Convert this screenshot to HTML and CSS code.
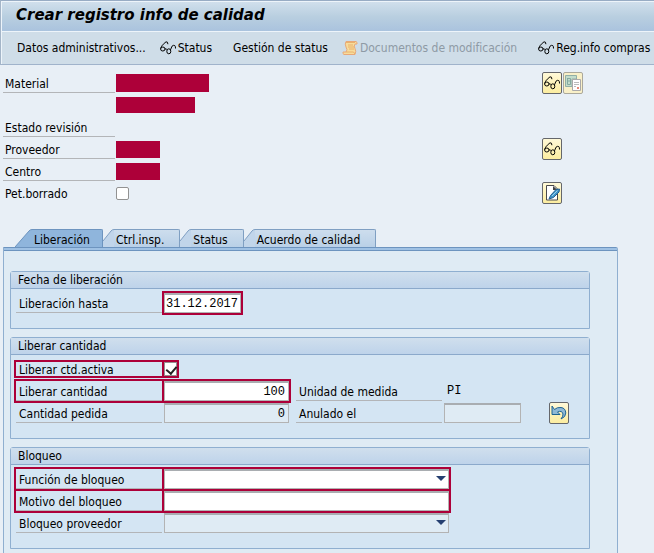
FILE: index.html
```html
<!DOCTYPE html>
<html lang="es">
<head>
<meta charset="UTF-8" />
<meta name="viewport" content="width=device-width, initial-scale=1.0" />
<title>Crear registro info de calidad</title>
<link rel="stylesheet" href="styles.css">
</head>
<body>
<svg class="sprite" aria-hidden="true">
  <symbol id="glasses" viewBox="0 0 16 16">
    <g fill="none" stroke="#000">
      <ellipse cx="2.800" cy="9" rx="2.200" ry="2"/>
      <ellipse cx="8.800" cy="11.300" rx="2" ry="2.500"/>
      <path d="M.7 8.500C1 7 2 5.500 3.300 4.200L6 1.800Q8 1.500 7.900 4.200M5 9Q6.500 8.300 7.200 9.800M10.500 9.800L12 6.200Q13.500 4.800 14.800 5.600Q15.600 6.300 15.500 8.500"/>
    </g>
  </symbol>
</svg>

<header>
  <h1>Crear registro info de calidad</h1>
  <nav class="toolbar">
    <button type="button">Datos administrativos...</button>
    <button type="button" class="last"><svg class="icon"><use href="#glasses"/></svg>Status</button>
    <button type="button">Gestión de status</button>
    <button type="button" class="last" disabled><svg class="icon" viewBox="0 0 16 16"><path d="M4 1.500H14Q15.500 2 15 4H13Q11.500 6 13 8.500Q14.500 11 13 14.500H2Q.5 14 1 12H4Q6 10 4 7Q2.500 4 4 1.500Z" fill="#f7dc9b" stroke="#e8a878"/><path d="M4 2.500H13M6 5H11M6 7H12M7 9H12M4 12H11.500L13 14" fill="none" stroke="#eab06c"/></svg>Documentos de modificación</button>
    <button type="button"><svg class="icon"><use href="#glasses"/></svg>Reg.info compras</button>
  </nav>
</header>

<main>
  <section class="head">
    <div class="row">
      <span class="label">Material</span>
      <span class="mask material"></span>
      <div class="actions">
        <button type="button" class="tool" aria-label="Visualizar material"><svg class="icon"><use href="#glasses"/></svg></button>
        <button type="button" class="tool" aria-label="Textos" disabled><svg class="icon" viewBox="0 0 16 16"><path d="M.5 .5H11.500V4H7V11.500H.5Z" fill="#c3dccb" stroke="#91afa6"/><path d="M2.500 3V9.500H5.500V3.500H3M3 6H5" fill="none" stroke="#84aaa0"/><path d="M7.500 4.500H15.500V15.500H7.500Z" fill="#fff" stroke="#aaa9a9"/><path d="M9 7.500H14M9 9.500H14M9 11.500H11" stroke="#bbb"/><path d="M12 12h2v2h-2z" fill="#e58a78"/></svg></button>
      </div>
    </div>
    <div class="row">
      <span class="label plain"></span>
      <span class="mask text"></span>
    </div>
    <div class="row">
      <span class="label">Estado revisión</span>
    </div>
    <div class="row">
      <span class="label">Proveedor</span>
      <span class="mask short"></span>
      <div class="actions">
        <button type="button" class="tool" aria-label="Visualizar proveedor"><svg class="icon"><use href="#glasses"/></svg></button>
      </div>
    </div>
    <div class="row">
      <span class="label">Centro</span>
      <span class="mask short"></span>
    </div>
    <div class="row">
      <label class="label plain" for="borrado">Pet.borrado</label>
      <input type="checkbox" id="borrado">
      <div class="actions">
        <button type="button" class="tool" aria-label="Texto explicativo"><svg class="icon" viewBox="0 0 16 16"><path d="M2.500 .5H10L13.500 4V15H2.500Z" fill="#fff" stroke="#49494d"/><path d="M9 1V5H13.500Z" fill="#444"/><path d="M5 14L6.500 10.500L12 4.500L15.500 4L15 7L9.500 12.500Z" fill="#3f94c8" stroke="#245f91"/><path d="M8 11L13.500 5.500" stroke="#9bd0ec"/></svg></button>
      </div>
    </div>
  </section>

  <div class="tabs" role="tablist">
    <button type="button" class="tab active" role="tab" aria-selected="true"><svg class="slope" viewBox="0 0 17 18"><path d="M0 18L14 2Q15 .5 17 .5V18Z" fill="#8fb5dc"/><path d="M0 18L14 2Q15 .5 17 .5" fill="none" stroke="#6d94bf"/></svg><span>Liberación</span></button>
    <button type="button" class="tab" role="tab"><svg class="slope" viewBox="0 0 11 18"><path d="M0 12L8 2Q9 .5 11 .5V18H0Z" fill="#c1d5ea"/><path d="M0 12L8 2Q9 .5 11 .5" fill="none" stroke="#7f9fc2"/></svg><span>Ctrl.insp.</span></button>
    <button type="button" class="tab" role="tab"><svg class="slope" viewBox="0 0 11 18"><path d="M0 12L8 2Q9 .5 11 .5V18H0Z" fill="#c1d5ea"/><path d="M0 12L8 2Q9 .5 11 .5" fill="none" stroke="#7f9fc2"/></svg><span>Status</span></button>
    <button type="button" class="tab" role="tab"><svg class="slope" viewBox="0 0 11 18"><path d="M0 12L8 2Q9 .5 11 .5V18H0Z" fill="#c1d5ea"/><path d="M0 12L8 2Q9 .5 11 .5" fill="none" stroke="#7f9fc2"/></svg><span>Acuerdo de calidad</span></button>
  </div>

  <div class="panel" role="tabpanel">
    <section class="group">
      <h2>Fecha de liberación</h2>
      <div class="row">
        <label class="label" for="hasta">Liberación hasta</label>
        <input type="text" class="date marked" id="hasta" value="31.12.2017">
      </div>
    </section>

    <section class="group">
      <h2>Liberar cantidad</h2>
      <div class="row">
        <label class="label check marked" for="activa">Liberar ctd.activa</label>
        <input type="checkbox" class="marked" id="activa" checked>
      </div>
      <div class="row">
        <label class="label marked" for="cantidad">Liberar cantidad</label>
        <input type="text" class="amount marked" id="cantidad" value="100">
        <span class="label second">Unidad de medida</span>
        <span class="value">PI</span>
      </div>
      <div class="row">
        <label class="label" for="pedida">Cantidad pedida</label>
        <input type="text" class="amount" id="pedida" value="0" readonly>
        <label class="label second" for="anulado">Anulado el</label>
        <input type="text" class="date" id="anulado" readonly>
        <button type="button" class="tool undo" aria-label="Anular"><svg class="icon" viewBox="0 0 16 16"><path d="M1 1V9.500H9L6.500 7Q11 5 12 9Q12.300 11 10 14Q14.800 12 14.800 8Q14.500 3 10 2.500Q6 2 3.500 4.500Z" fill="#8fb9d6" stroke="#1f6492"/></svg></button>
      </div>
    </section>

    <section class="group">
      <h2>Bloqueo</h2>
      <div class="row">
        <label class="label marked" for="funcion">Función de bloqueo</label>
        <div class="dropdown"><select id="funcion" class="marked"><option></option></select></div>
      </div>
      <div class="row">
        <label class="label marked" for="motivo">Motivo del bloqueo</label>
        <input type="text" class="long marked" id="motivo">
      </div>
      <div class="row">
        <label class="label" for="bloqueo">Bloqueo proveedor</label>
        <div class="dropdown"><select id="bloqueo" disabled><option></option></select></div>
      </div>
    </section>
  </div>
</main>
</body>
</html>
```
FILE: styles.css
```css
* {
  box-sizing: border-box;
}
body {
  margin: 0;
  min-height: 100vh;
  display: flex;
  flex-direction: column;
  background: #e8eff6;
  color: #000;
  font-family: "DejaVu Sans Condensed", Tahoma, sans-serif;
  font-size: 12px;
  line-height: 16px;
}
button, input, select {
  font: inherit;
  color: inherit;
  margin: 0;
}
.sprite {
  display: none;
}
.icon {
  width: 16px;
  height: 16px;
  flex: none;
}

/* title and toolbar */
header {
  border-top: 1px solid #98acc4;
  border-left: 1px solid #a4b5c8;
  border-bottom: 1px solid #a0b3cb;
}
h1 {
  margin: 0;
  height: 31px;
  padding-left: 14px;
  border: 1px solid #edf4fa;
  border-right: 0;
  background: linear-gradient(#d0dfec, #b9cfe0 50%, #aac3de);
  font-family: "DejaVu Sans", Verdana, sans-serif;
  font-size: 15px;
  font-style: italic;
  line-height: 26px;
}
.toolbar {
  display: flex;
  align-items: center;
  height: 32px;
  padding-left: 8px;
  border-left: 1px solid #edf4fa;
  background: #cfdde8;
  overflow: hidden;
}
.toolbar button {
  display: flex;
  align-items: center;
  gap: 2px;
  flex: none;
  padding: 0 7px;
  border: 0;
  background: none;
  white-space: nowrap;
}
.toolbar .last {
  margin-right: 7px;
}
.toolbar button:disabled {
  color: #8e9aa5;
}

/* form rows */
main {
  flex: 1;
  display: flex;
  flex-direction: column;
}
.row {
  display: flex;
  align-items: center;
  gap: 2px;
  height: 22px;
}
.label {
  flex: none;
  width: 146px;
  height: 20px;
  padding-left: 3px;
  border-bottom: 1px solid #b3b5b8;
  line-height: 22px;
  white-space: nowrap;
}
.label.plain, .label.check {
  border-bottom: 0;
}
.label.check {
  height: 14px;
  line-height: 16px;
}
.head {
  padding: 7px 0 0 3px;
}
.head .label {
  width: 112px;
  padding-left: 2px;
}
.head .row {
  width: 580px;
  gap: 1px;
}
.mask {
  height: 17px;
  background: #ad0039;
}
.mask.material { width: 93px; height: 18px; }
.mask.text { width: 79px; height: 16px; }
.mask.short { width: 44px; }
.actions {
  display: flex;
  gap: 1px;
  width: 41px;
  margin-left: auto;
}
.tool {
  display: flex;
  align-items: center;
  justify-content: center;
  flex: none;
  width: 20px;
  height: 22px;
  padding: 0;
  border: 1px solid #65676b;
  border-radius: 2px;
  background: linear-gradient(#fff9d8, #fceda0);
}
.tool:disabled {
  border-color: #aaa89c;
  background: #f9f0c8;
}
.tool.undo {
  margin-left: 26px;
}

/* fields */
input[type="text"], select {
  height: 20px;
  padding: 0 3px 0 2px;
  border: 1px solid #b3b3b3;
  border-top: 2px solid #a9adb1;
  border-radius: 0;
  background: #fff;
  font-family: "Liberation Mono", monospace;
}
input[type="text"]:read-only, select:disabled {
  background: #dfebf4;
  opacity: 1;
}
input[type="text"].date {
  width: 77px;
  padding: 0 1px;
}
.amount { width: 125px; text-align: right; }
.long { width: 285px; }
.value {
  padding-left: 3px;
  font-family: "Liberation Mono", monospace;
}
.second {
  margin-left: 5px;
}
input[type="checkbox"] {
  appearance: none;
  width: 13px;
  height: 13px;
  border: 1px solid #929292;
  border-radius: 2px;
  background: #fff;
}
input[type="checkbox"]:checked::before {
  content: "";
  display: block;
  width: 5px;
  height: 8px;
  margin: 1px 0 0 3px;
  border: solid #222;
  border-width: 0 2px 2px 0;
  transform: rotate(40deg);
}
.marked {
  outline: 2px solid #ad0039;
}
input[type="checkbox"].marked {
  height: 14px;
  border-radius: 0;
}
.dropdown {
  position: relative;
  width: 285px;
  height: 20px;
}
.dropdown select {
  appearance: none;
  display: block;
  width: 100%;
}
.dropdown::after {
  content: "";
  position: absolute;
  top: 7px;
  right: 3px;
  border: solid transparent;
  border-width: 5px 5px 0;
  border-top-color: #253f70;
  pointer-events: none;
}

/* tabs */
.tabs {
  display: flex;
  margin-top: 25px;
  padding-left: 15px;
}
.tab {
  display: flex;
  height: 18px;
  padding: 0;
  border: 0;
  background: none;
}
.tab span {
  height: 18px;
  padding: 0 15px 0 2px;
  border-top: 1px solid #7f9fc2;
  border-right: 1px solid #7f9fc2;
  border-top-right-radius: 2px;
  background: linear-gradient(#cddded, #b9d0e7);
  line-height: 20px;
}
.tab.active span {
  padding-right: 12px;
  border-color: #6d94bf;
  background: #8fb5dc;
}
.slope {
  width: 11px;
  height: 18px;
}
.active .slope {
  width: 17px;
}
.panel {
  flex: 1;
  width: 94%;
  margin-left: 3px;
  padding: 24px 27px 4px 6px;
  border: 1px solid #8fafd0;
  border-top: 0;
  border-bottom: 0;
  border-top-right-radius: 2px;
  background: linear-gradient(#6d94bf 1px, #9fc1e4 1px, #9fc1e4 3px, #6d94bf 3px, #6d94bf 4px, #dfebf4 4px);
}

/* boxed groups */
.group {
  margin-bottom: 8px;
  padding: 0 5px 14px;
  border: 1px solid #8fafd0;
  border-radius: 3px 3px 0 0;
  background: #d4e5f3;
}
.group h2 {
  height: 17px;
  margin: 0 -5px 3px;
  padding-left: 7px;
  border-bottom: 1px solid #8ba9cb;
  background: linear-gradient(#d0dfed, #bed3ea);
  font-size: 12px;
  font-weight: normal;
}
```
